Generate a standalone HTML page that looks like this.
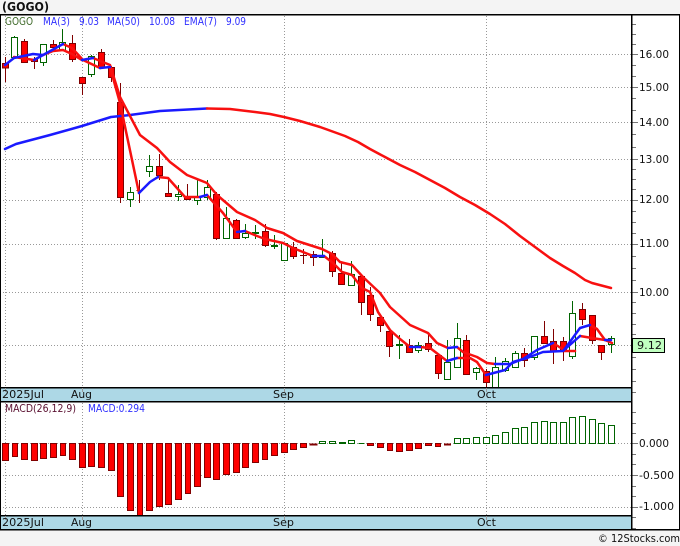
<!DOCTYPE html>
<html><head><meta charset="utf-8"><style>
html,body{margin:0;padding:0;background:#f4f4f4;width:680px;height:546px;overflow:hidden}
svg{display:block}
text{font-family:"DejaVu Sans","Liberation Sans",sans-serif;font-size:11px;fill:#111}
</style></head><body>
<svg width="680" height="546" viewBox="0 0 680 546" xmlns="http://www.w3.org/2000/svg">
<rect width="680" height="546" fill="#f4f4f4"/>
<rect x="0" y="14" width="680" height="516" fill="#fff"/>
<text x="2" y="11" style="font-weight:bold;font-size:12.500px" textLength="47" lengthAdjust="spacingAndGlyphs" fill="#000">(GOGO)</text>
<!-- grid -->
<path d="M0 54.500H631M0 87.500H631M0 122.500H631M0 159.500H631M0 200.500H631M0 244.500H631M0 292.500H631M0 345.500H631M0 443.500H631M0 475.500H631M0 507.500H631M5.500 16V387M82.500 16V387M284.500 16V387M486.500 16V387M5.500 403V515M82.500 403V515M284.500 403V515M486.500 403V515" stroke="#999" stroke-width="1" stroke-dasharray="1 2" fill="none"/>
<!-- legend -->
<text x="5" y="25" textLength="28" lengthAdjust="spacingAndGlyphs" style="fill:#3f6a2a">GOGO</text>
<text x="43" y="25" textLength="27" lengthAdjust="spacingAndGlyphs" style="fill:#3030ff">MA(3)</text>
<text x="79" y="25" textLength="20" lengthAdjust="spacingAndGlyphs" style="fill:#3030ff">9.03</text>
<text x="107" y="25" textLength="33" lengthAdjust="spacingAndGlyphs" style="fill:#3030ff">MA(50)</text>
<text x="149" y="25" textLength="26" lengthAdjust="spacingAndGlyphs" style="fill:#3030ff">10.08</text>
<text x="184" y="25" textLength="33" lengthAdjust="spacingAndGlyphs" style="fill:#3030ff">EMA(7)</text>
<text x="226" y="25" textLength="20" lengthAdjust="spacingAndGlyphs" style="fill:#3030ff">9.09</text>
<!-- red wicks -->
<path fill="none" stroke="#800000" stroke-width="1" d="M5.500 57V82M24.500 39V63M34.500 57V69M53.500 40V50M72.500 35V62M82.500 77V95M101.500 49V68M111.500 66V82M120.500 83V203M139.500 180V203M159.500 154V180M168.500 177V197M187.500 184V199M216.500 192V240M236.500 219V238M265.500 224V247M293.500 242V259M303.500 249V264M313.500 251V266M332.500 251V277M341.500 263V285M361.500 276V315M370.500 287V321M380.500 317V332M389.500 329V357M409.500 339V353M428.500 334V352M438.500 355V379M466.500 335V375M486.500 369V387M524.500 348V367M544.500 321V344M553.500 329V364M563.500 337V361M582.500 303V325M592.500 315V344M601.500 345V360M136.500 190.500H143M300 255.500H307"/>
<!-- green wicks -->
<path fill="none" stroke="#006400" stroke-width="1" d="M14.500 36V58M43.500 44V66M62.500 29V50M91.500 55V77M130.500 187V207M149.500 155V177M178.500 185V201M197.500 179V205M207.500 180V200M226.500 207V238M245.500 224V239M255.500 225V239M274.500 235V249M284.500 243V260M322.500 239V258M351.500 261V285M399.500 335V359M418.500 342V353M447.500 340V379M457.500 323V367M476.500 367V380M495.500 357V387M505.500 358V372M515.500 351V367M534.500 336V360M572.500 301V359M611.500 336V353"/>
<!-- red bodies -->
<path fill="#f00" stroke="#800000" stroke-width="1" d="M2.500 63.500h6v4.500h-6zM21.500 41.500h6v21h-6zM31.500 59.500h6v2h-6zM50.500 44.500h6v3h-6zM69.500 43.500h6v16h-6zM79.500 77.500h6v6h-6zM98.500 52.500h6v15h-6zM108.500 67.500h6v10h-6zM117.500 102.500h6v95h-6zM156.500 166.500h6v9h-6zM165.500 193.500h6v3h-6zM184.500 196.500h6v3h-6zM213.500 194.500h6v44h-6zM233.500 220.500h6v18h-6zM262.500 231.500h6v14h-6zM290.500 247.500h6v9h-6zM310.500 254.500h6v3h-6zM329.500 253.500h6v18h-6zM338.500 273.500h6v11h-6zM358.500 276.500h6v26h-6zM367.500 295.500h6v19h-6zM377.500 317.500h6v8h-6zM386.500 331.500h6v15h-6zM406.500 345.500h6v7h-6zM425.500 343.500h6v6h-6zM435.500 355.500h6v18h-6zM463.500 340.500h6v34h-6zM483.500 371.500h6v11h-6zM521.500 353.500h6v7h-6zM541.500 336.500h6v7h-6zM550.500 341.500h6v10h-6zM560.500 341.500h6v10h-6zM579.500 309.500h6v10h-6zM589.500 315.500h6v25h-6zM598.500 345.500h6v7h-6z"/>
<!-- green bodies -->
<path fill="#fff" stroke="#006400" stroke-width="1" d="M11.500 37.500h6v20h-6zM40.500 44.500h6v18h-6zM59.500 42.500h6v8h-6zM88.500 56.500h6v18h-6zM127.500 192.500h6v7h-6zM146.500 166.500h6v5h-6zM175.500 194.500h6v2h-6zM194.500 197.500h6v3h-6zM204.500 187.500h6v10h-6zM223.500 218.500h6v20h-6zM242.500 233.500h6v4h-6zM252.500 232.500h6v1h-6zM271.500 245.500h6v1h-6zM281.500 243.500h6v17h-6zM319.500 256.500h6v1h-6zM348.500 274.500h6v11h-6zM396.500 344.500h6v1h-6zM415.500 345.500h6v5h-6zM444.500 362.500h6v17h-6zM454.500 338.500h6v29h-6zM473.500 368.500h6v4h-6zM492.500 367.500h6v20h-6zM502.500 361.500h6v9h-6zM512.500 353.500h6v14h-6zM531.500 336.500h6v21h-6zM569.500 313.500h6v43h-6zM608.500 338.500h6v6h-6z"/>
<!-- lines -->
<g fill="none" stroke-width="2.500" stroke-linejoin="round" stroke-linecap="round">
<path stroke="#1a1aff" d="M5 149L16 144 50 135 82 126 111 117 130 115 160 111 207 108.500"/>
<path stroke="#f81010" d="M207 108.500L230 109 255 112 270 114 284 117 300 121 320 127 345 136 358 142 370 149 385 157 400 165 415 172 430 180 445 188 460 197 475 205 490 214 505 224 520 236 535 247 550 258 563 266 575 273 585 280 592 283 611 288"/>
<path stroke="#f81010" d="M43 55L53 51 63 50 72 54 82 60M93 58L110 65 120 97 140 135 157 148 170 162 187 175 207 183 217 195 237 212 255 220 267 228 283 233 297 241 322 249 332 254 340 262 352 265 363 277 380 293 390 307 410 325 428 333 437 343 448 348M457 347L463 352 477 357 487 363 495 364M553 343L564 350M590 325L597 329 605 340 612 343"/>
<path stroke="#f81010" d="M14 57L34 60M63 44L72 48 83 60 100 68M110 67L120 103 139 193M158 177L168 178 185 197 200 197M207 195L223 213 237 232M245 231L257 236 265 239 283 243 293 248 313 256M324 256L333 263 342 272 352 275 362 288 370 292 378 312 390 330 400 339 410 347M420 347L430 348 447 361M457 358L470 358 477 362 486 375M563 351L575 351M580 336L592 338 605 340"/>
<path stroke="#1a1aff" d="M5 65L14 58 33 54 43 55M82 60L93 58M448 348L457 347M495 364L510 364 523 359 537 350 553 343M564 350L580 328 590 325"/>
<path stroke="#1a1aff" d="M34 60L63 44M100 68L110 67M139 193L150 182 158 177M200 197L207 195M237 232L245 231M313 256L324 256M410 347L420 347M447 361L457 358M486 375L505 370 513 362 527 358 543 352 563 351 580 336M605 340L611 340"/>
</g>
<!-- time band 1 -->
<rect x="0" y="387" width="631" height="15" fill="#add8e6"/>
<rect x="0" y="387" width="631" height="1.500" fill="#000"/>
<rect x="0" y="401" width="631" height="1.500" fill="#000"/>
<path d="M5.500 388V392M82.500 388V392M284.500 388V392M486.500 388V392" stroke="#999" stroke-width="1"/>
<text x="2" y="398" textLength="42" lengthAdjust="spacingAndGlyphs">2025Jul</text>
<text x="71" y="398" textLength="21" lengthAdjust="spacingAndGlyphs">Aug</text>
<text x="273" y="398" textLength="21" lengthAdjust="spacingAndGlyphs">Sep</text>
<text x="477" y="398" textLength="19" lengthAdjust="spacingAndGlyphs">Oct</text>
<!-- MACD labels -->
<text x="5" y="412" textLength="71" lengthAdjust="spacingAndGlyphs" style="fill:#5a1030">MACD(26,12,9)</text>
<text x="88" y="412" textLength="57" lengthAdjust="spacingAndGlyphs" style="fill:#3030ff">MACD:0.294</text>
<!-- MACD red bars -->
<path fill="#f00" stroke="#800000" stroke-width="1" d="M2.500 443.500h6V460.500h-6zM12.500 443.500h5V456.500h-5zM21.500 443.500h6V459.500h-6zM31.500 443.500h6V460.500h-6zM40.500 443.500h6V458.500h-6zM50.500 443.500h6V457.500h-6zM60.500 443.500h5V455.500h-5zM69.500 443.500h6V459.500h-6zM79.500 443.500h6V467.500h-6zM88.500 443.500h6V466.500h-6zM98.500 443.500h6V467.500h-6zM108.500 443.500h6V470.500h-6zM117.500 443.500h6V496.500h-6zM127.500 443.500h6V510.500h-6zM137.500 443.500h5V515.500h-5zM146.500 443.500h6V510.500h-6zM156.500 443.500h6V506.500h-6zM165.500 443.500h6V504.500h-6zM175.500 443.500h6V499.500h-6zM185.500 443.500h5V493.500h-5zM194.500 443.500h6V486.500h-6zM204.500 443.500h6V477.500h-6zM213.500 443.500h6V479.500h-6zM223.500 443.500h6V474.500h-6zM233.500 443.500h6V472.500h-6zM242.500 443.500h6V467.500h-6zM252.500 443.500h6V462.500h-6zM262.500 443.500h5V459.500h-5zM271.500 443.500h6V455.500h-6zM281.500 443.500h6V452.500h-6zM290.500 443.500h6V449.500h-6zM300.500 443.500h6V447.500h-6zM367.500 443.500h6V445.500h-6zM377.500 443.500h6V447.500h-6zM387.500 443.500h5V450.500h-5zM396.500 443.500h6V451.500h-6zM406.500 443.500h6V450.500h-6zM415.500 443.500h6V448.500h-6zM425.500 443.500h6V445.500h-6zM435.500 443.500h5V446.500h-5zM310 444h7v1h-7zM444.500 444h6v1h-6z"/>
<!-- MACD green bars -->
<path fill="#fff" stroke="#006400" stroke-width="1" d="M319.500 441.500h6V443.500h-6zM329.500 441.500h6V443.500h-6zM339.500 442.500h6V443.500h-6zM348.500 440.500h6V443.500h-6zM358.500 443.500h6V443.500h-6zM454.500 438.500h6V443.500h-6zM463.500 438.500h6V443.500h-6zM473.500 437.500h6V443.500h-6zM483.500 437.500h6V443.500h-6zM492.500 435.500h6V443.500h-6zM502.500 432.500h6V443.500h-6zM512.500 428.500h6V443.500h-6zM521.500 427.500h6V443.500h-6zM531.500 422.500h6V443.500h-6zM541.500 421.500h6V443.500h-6zM550.500 422.500h6V443.500h-6zM560.500 422.500h6V443.500h-6zM569.500 417.500h6V443.500h-6zM579.500 416.500h6V443.500h-6zM589.500 419.500h6V443.500h-6zM598.500 423.500h6V443.500h-6zM608.500 425.500h6V443.500h-6z"/>
<!-- time band 2 -->
<rect x="0" y="515" width="631" height="15" fill="#add8e6"/>
<rect x="0" y="515" width="631" height="1.500" fill="#000"/>
<path d="M5.500 516V520M82.500 516V520M284.500 516V520M486.500 516V520" stroke="#999" stroke-width="1"/>
<text x="2" y="526" textLength="42" lengthAdjust="spacingAndGlyphs">2025Jul</text>
<text x="71" y="526" textLength="21" lengthAdjust="spacingAndGlyphs">Aug</text>
<text x="273" y="526" textLength="21" lengthAdjust="spacingAndGlyphs">Sep</text>
<text x="477" y="526" textLength="19" lengthAdjust="spacingAndGlyphs">Oct</text>
<!-- axis ticks -->
<path stroke="#777" stroke-width="1" fill="none" d="M632 24.500h4M632 34.500h4M632 44.500h4M632 54.500h6M632 65.500h4M632 76.500h4M632 87.500h6M632 98.500h4M632 110.500h4M632 122.500h6M632 134.500h4M632 147.500h4M632 159.500h6M632 169.500h4M632 179.500h4M632 189.500h4M632 200.500h6M632 211.500h4M632 222.500h4M632 233.500h4M632 244.500h6M632 256.500h4M632 268.500h4M632 280.500h4M632 292.500h6M632 302.500h4M632 313.500h4M632 324.500h4M632 334.500h4M632 357.500h4M632 369.500h4M632 381.500h4M632 392.500h4M632 412.500h4M632 423.500h4M632 433.500h4M632 443.500h6M632 454.500h4M632 464.500h4M632 475.500h6M632 486.500h4M632 496.500h4M632 507.500h6M632 517.500h4M632 528.500h4"/>
<!-- borders -->
<rect x="0" y="14" width="680" height="1.500" fill="#000"/>
<rect x="0" y="14" width="1" height="516" fill="#000"/>
<rect x="631" y="14" width="1.500" height="516" fill="#000"/>
<rect x="679" y="14" width="1" height="516" fill="#000"/>
<rect x="0" y="529" width="680" height="1.500" fill="#000"/>
<!-- axis labels -->
<text x="639" y="58" textLength="30" lengthAdjust="spacingAndGlyphs">16.00</text>
<text x="639" y="91" textLength="30" lengthAdjust="spacingAndGlyphs">15.00</text>
<text x="639" y="126" textLength="30" lengthAdjust="spacingAndGlyphs">14.00</text>
<text x="639" y="163" textLength="30" lengthAdjust="spacingAndGlyphs">13.00</text>
<text x="639" y="203" textLength="30" lengthAdjust="spacingAndGlyphs">12.00</text>
<text x="639" y="247" textLength="30" lengthAdjust="spacingAndGlyphs">11.00</text>
<text x="639" y="296" textLength="30" lengthAdjust="spacingAndGlyphs">10.00</text>
<rect x="632.500" y="338.500" width="32" height="14" fill="#c0ffc0" stroke="#000" stroke-width="1"/>
<text x="637" y="349" textLength="25" lengthAdjust="spacingAndGlyphs">9.12</text>
<text x="639" y="447" textLength="30" lengthAdjust="spacingAndGlyphs">0.000</text>
<text x="639" y="479" textLength="35" lengthAdjust="spacingAndGlyphs">-0.500</text>
<text x="639" y="510" textLength="35" lengthAdjust="spacingAndGlyphs">-1.000</text>
<text x="598" y="542" textLength="82" lengthAdjust="spacingAndGlyphs">© 12Stocks.com</text>
</svg>
</body></html>
